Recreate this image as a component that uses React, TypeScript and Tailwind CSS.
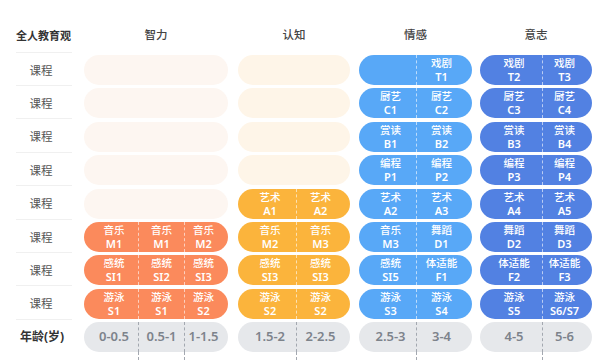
import React from 'react';

type Cell = [string, string] | null;
type Group = {
  name: string;
  wrap: string;
  widths: string[];
  color: string;
  faded: string;
  rows: (Cell[] | null)[];
  ages: string[];
};

const groups: Group[] = [
  {
    name: '智力',
    wrap: 'ml-[12px] w-[144px]',
    widths: ['w-[54px]', 'w-[46px]', 'w-[44px]'],
    color: 'bg-[#fb8a5c]',
    faded: 'bg-[#fdf6f1]',
    rows: [
      null, null, null, null, null,
      [['音乐', 'M1'], ['音乐', 'M1'], ['音乐', 'M2']],
      [['感统', 'SI1'], ['感统', 'SI2'], ['感统', 'SI3']],
      [['游泳', 'S1'], ['游泳', 'S1'], ['游泳', 'S2']],
    ],
    ages: ['0-0.5', '0.5-1', '1-1.5'],
  },
  {
    name: '认知',
    wrap: 'ml-[10px] w-[112px]',
    widths: ['w-[58px]', 'w-[54px]'],
    color: 'bg-[#fbb43c]',
    faded: 'bg-[#fef5e8]',
    rows: [
      null, null, null, null,
      [['艺术', 'A1'], ['艺术', 'A2']],
      [['音乐', 'M2'], ['音乐', 'M3']],
      [['感统', 'SI3'], ['感统', 'SI3']],
      [['游泳', 'S2'], ['游泳', 'S2']],
    ],
    ages: ['1.5-2', '2-2.5'],
  },
  {
    name: '情感',
    wrap: 'ml-[9px] w-[113px]',
    widths: ['w-[57px]', 'w-[56px]'],
    color: 'bg-[#58a8f7]',
    faded: 'bg-[#58a8f7]',
    rows: [
      [null, ['戏剧', 'T1']],
      [['厨艺', 'C1'], ['厨艺', 'C2']],
      [['赏读', 'B1'], ['赏读', 'B2']],
      [['编程', 'P1'], ['编程', 'P2']],
      [['艺术', 'A2'], ['艺术', 'A3']],
      [['音乐', 'M3'], ['舞蹈', 'D1']],
      [['感统', 'SI5'], ['体适能', 'F1']],
      [['游泳', 'S3'], ['游泳', 'S4']],
    ],
    ages: ['2.5-3', '3-4'],
  },
  {
    name: '意志',
    wrap: 'ml-[8px] w-[112px]',
    widths: ['w-[62px]', 'w-[50px]'],
    color: 'bg-[#5281e2]',
    faded: 'bg-[#5281e2]',
    rows: [
      [['戏剧', 'T2'], ['戏剧', 'T3']],
      [['厨艺', 'C3'], ['厨艺', 'C4']],
      [['赏读', 'B3'], ['赏读', 'B4']],
      [['编程', 'P3'], ['编程', 'P4']],
      [['艺术', 'A4'], ['艺术', 'A5']],
      [['舞蹈', 'D2'], ['舞蹈', 'D3']],
      [['体适能', 'F2'], ['体适能', 'F3']],
      [['游泳', 'S5'], ['游泳', 'S6/S7']],
    ],
    ages: ['4-5', '5-6'],
  },
];

function cellPad(i: number, n: number) {
  if (i === 0) return 'pl-[6px]';
  if (i === n - 1) return 'pr-[6px]';
  return '';
}

function Pill({ g, row }: { g: Group; row: Cell[] | null }) {
  if (!row) {
    return <div className={`h-[30px] w-full rounded-full ${g.faded}`} />;
  }
  return (
    <div className={`h-[30px] w-full rounded-full flex overflow-hidden ${g.color}`}>
      {row.map((c, i) => (
        <div
          key={i}
          className={`${g.widths[i]} ${cellPad(i, row.length)} h-full flex flex-col items-center justify-center text-white text-[10.5px] leading-[14px] font-medium ${
            i > 0 ? 'border-l border-dashed border-white/60' : ''
          }`}
        >
          {c && (
            <>
              <span>{c[0]}</span>
              <span className="text-[11px] font-semibold">{c[1]}</span>
            </>
          )}
        </div>
      ))}
    </div>
  );
}

export default function App() {
  const rowIdx = [0, 1, 2, 3, 4, 5, 6, 7];
  return (
    <div
      className="w-[600px] h-[361px] bg-white overflow-hidden pl-[16px]"
      style={{ fontFamily: '"Noto Sans", "Noto Sans CJK SC", sans-serif' }}
    >
      {/* header */}
      <div className="h-[51.6px] pt-[18px] flex items-center">
        <div className="w-[56px] pt-[3px] text-[11px] font-bold text-[#333] whitespace-nowrap">全人教育观</div>
        {groups.map((g) => (
          <div key={g.name} className={`${g.wrap} text-center text-[11.5px] font-medium text-[#444]`}>
            {g.name}
          </div>
        ))}
      </div>

      {rowIdx.map((r) => (
        <div key={r} className="h-[33.4px] flex items-end">
          <div className="w-[56px] h-full border-t border-[#f0f0f0] flex items-center justify-center pt-[3px] pr-[6px] text-[11.5px] text-[#555]">
            课程
          </div>
          {groups.map((g) => (
            <div key={g.name} className={g.wrap}>
              <Pill g={g} row={g.rows[r]} />
            </div>
          ))}
        </div>
      ))}

      {/* age row */}
      <div className="h-[33.4px] flex items-end">
        <div className="w-[56px] h-full border-t border-[#f0f0f0] flex items-center justify-center pt-[3px] pr-[4px] text-[12px] font-bold text-[#333] whitespace-nowrap">
          年龄(岁)
        </div>
        {groups.map((g) => (
          <div key={g.name} className={g.wrap}>
            <div className="h-[30px] w-full rounded-full flex bg-[#e6e8eb]">
              {g.ages.map((a, i) => (
                <div
                  key={a}
                  className={`${g.widths[i]} ${cellPad(i, g.ages.length)} relative h-full flex items-center justify-center text-[13px] font-semibold text-[#7d838b] ${
                    i > 0 ? 'border-l border-dashed border-[#a3a8b0]' : ''
                  }`}
                >
                  {a}
                  {i > 0 && (
                    <span className="absolute left-[-1px] top-[30px] h-[8px] border-l border-dashed border-[#a3a8b0]" />
                  )}
                </div>
              ))}
            </div>
          </div>
        ))}
      </div>
    </div>
  );
}
